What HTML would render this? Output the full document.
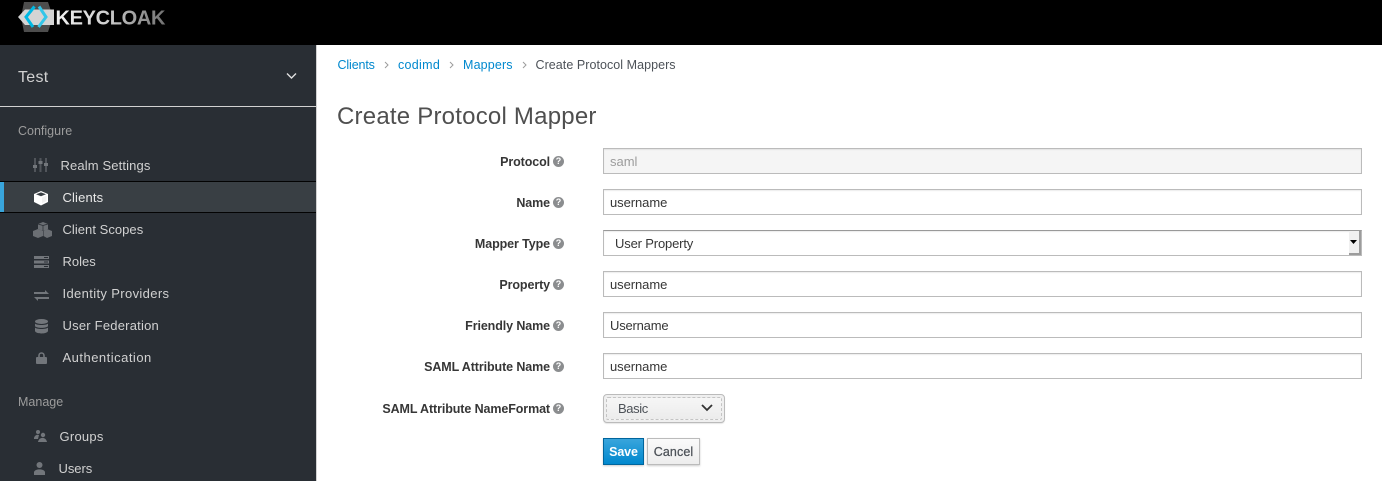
<!DOCTYPE html>
<html><head><meta charset="utf-8"><title>Keycloak</title>
<style>
html,body{margin:0;padding:0;width:1382px;height:481px;overflow:hidden;background:#fff;font-family:"Liberation Sans",sans-serif;font-size:13px;color:#363636}
div,span,svg{position:absolute;box-sizing:border-box}
.t{white-space:nowrap;line-height:16px;height:16px;margin-top:1px}
.n{color:#d1d1d1}
.h{color:#9c9c9c;font-size:12.5px}
.l{font-weight:bold;color:#363636;text-align:right;right:832px;font-size:12.5px;letter-spacing:-.1px}
.q{width:11px;height:11px;border-radius:50%;background:#8b8d8f;color:#fff;font-size:9px;line-height:11px;text-align:center;font-weight:bold;left:0;top:0}
.i{left:603px;width:759px;height:26px;border:1px solid #bbb;background:#fff;box-shadow:inset 0 1px 1px rgba(3,3,3,.075)}
.v{letter-spacing:-.07px}
.a{color:#0088ce;font-size:12.5px}
</style></head><body>
<div style="left:0;top:0;width:1382px;height:45px;background:#000"></div>
<svg style="left:17px;top:0" width="155" height="34" viewBox="0 0 155 34">
<defs><linearGradient id="g" x1="0" x2="1" y1="0" y2="0"><stop offset="0" stop-color="#f2f2f2"/><stop offset=".45" stop-color="#d0d0d0"/><stop offset="1" stop-color="#707070"/></linearGradient></defs>
<polygon points="7,2 31,2 36,17 31,32 7,32 4,17" fill="#4d4d4d"/>
<polygon points="8,9.500 37,9.500 37,25 8,25 1,17" fill="#d4d4d4"/>
<path d="M17.500 6.500 L9 17 L16 27" fill="none" stroke="#00b8e3" stroke-width="3"/>
<path d="M22 6.500 L29 17 L21.500 27" fill="none" stroke="#33c6e9" stroke-width="3"/>
<text x="38.500" y="24.500" font-family="Liberation Sans,sans-serif" font-size="20" font-weight="bold" fill="url(#g)" textLength="110" lengthAdjust="spacing">KEYCLOAK</text>
</svg>

<div style="left:0;top:45px;width:316px;height:436px;background:#292e34"></div>
<div style="left:316px;top:45px;width:1px;height:436px;background:#d1d1d1"></div>
<div class="t" style="left:18px;top:68px;font-size:16px;line-height:18px;height:18px;color:#d1d1d1;letter-spacing:.3px">Test</div>
<svg style="left:286px;top:72px" width="11" height="8"><path d="M1 1.500L5.500 6L10 1.500" fill="none" stroke="#e0e0e0" stroke-width="1.400"/></svg>
<div style="left:0;top:106px;width:316px;height:1px;background:#d1d1d1"></div>

<div class="t h" style="left:18px;top:122px">Configure</div>
<div style="left:0;top:181px;width:316px;height:32px;background:#393f44;border-top:1px solid #030303;border-bottom:1px solid #030303"></div>
<div style="left:0;top:182px;width:4px;height:30px;background:#39a5dc"></div>

<svg style="left:33px;top:157px" width="16" height="16" fill="#72767b"><rect x="1" y="1" width="2" height="14" opacity=".55"/><rect x="6.500" y="1" width="2" height="14" opacity=".55"/><rect x="12" y="1" width="2" height="14" opacity=".55"/><rect x="0" y="8" width="4" height="3"/><rect x="5.500" y="4" width="4" height="3"/><rect x="11" y="6" width="4" height="3"/></svg>
<div class="t n" style="left:60.500px;top:157px;letter-spacing:.13px">Realm Settings</div>

<svg style="left:33px;top:190px" width="16" height="16"><polygon points="8,1 15,4 15,12 8,15.500 1,12 1,4" fill="#fff"/><polygon points="3,4.200 8,2.400 13,4.200 8,6.200" fill="#393f44"/><polygon points="9,7.500 13.500,5.700 13.500,11 9,13.200" fill="#d8d8d8" opacity=".35"/></svg>
<div class="t n" style="left:62.500px;top:189px;color:#e8e8e8;letter-spacing:.14px">Clients</div>

<svg style="left:33px;top:221px" width="20" height="17" fill="#6b6f74"><polygon points="10,1 15,3 15,8 10,10 5,8 5,3"/><polygon points="5,8 10,10 10,15 5,17 0,15 0,10"/><polygon points="14,8 19,10 19,15 14,17 10.500,15 10.500,10"/><path d="M10 4.500L5 3M10 4.500L15 3M10 4.500V10" stroke="#292e34" stroke-width=".7"/></svg>
<div class="t n" style="left:62.500px;top:221px;letter-spacing:.04px">Client Scopes</div>

<svg style="left:34px;top:256px" width="15" height="12" fill="#72767b"><rect width="15" height="3"/><rect y="4.500" width="15" height="3"/><rect y="9" width="15" height="3"/><rect x="10" y="1" width="4" height="1" fill="#292e34"/><rect x="10" y="5.500" width="4" height="1" fill="#292e34"/><rect x="10" y="10" width="4" height="1" fill="#292e34"/></svg>
<div class="t n" style="left:62.500px;top:253px">Roles</div>

<svg style="left:34px;top:290px" width="15" height="11" fill="#72767b"><path d="M0 2H11V0L15 4H0Z"/><path d="M0 7H15V9H4V11Z"/></svg>
<div class="t n" style="left:62.500px;top:285px;letter-spacing:.36px">Identity Providers</div>

<svg style="left:35px;top:319px" width="13" height="15" fill="#72767b"><ellipse cx="6.500" cy="2.500" rx="6.500" ry="2.500"/><path d="M0 4.500C1 6.500 12 6.500 13 4.500V7C12 9.500 1 9.500 0 7zM0 8.500C1 10.500 12 10.500 13 8.500V12C12 15.300 1 15.300 0 12z"/></svg>
<div class="t n" style="left:62.500px;top:317px;letter-spacing:.22px">User Federation</div>

<svg style="left:36px;top:352px" width="11" height="12"><path d="M3 6V3.500a2.500 2.500 0 0 1 5 0V6" fill="none" stroke="#72767b" stroke-width="1.600"/><rect y="5" width="11" height="7" rx="1" fill="#72767b"/></svg>
<div class="t n" style="left:62.500px;top:349px;letter-spacing:.49px">Authentication</div>

<div class="t h" style="left:18px;top:393px">Manage</div>

<svg style="left:34px;top:430px" width="13" height="12" fill="#72767b"><circle cx="4" cy="2" r="2"/><circle cx="9" cy="5" r="2.200"/><path d="M0 8C1 4.500 4 4.500 5 5L4 9H0zM4 12C5 6.500 12 6.500 13 12z"/></svg>
<div class="t n" style="left:59.500px;top:428px;letter-spacing:.25px">Groups</div>

<svg style="left:34px;top:462px" width="11" height="13" fill="#72767b"><circle cx="5.500" cy="3" r="3"/><path d="M0 13V10C1 6.500 10 6.500 11 10V13z"/></svg>
<div class="t n" style="left:58.500px;top:460px;letter-spacing:-.06px">Users</div>

<div class="t a" style="left:337.500px;top:56px;letter-spacing:-.13px">Clients</div>
<svg style="left:384px;top:61px" width="6" height="8"><path d="M1 1L4 4L1 7" fill="none" stroke="#9c9c9c" stroke-width="1"/></svg>
<div class="t a" style="left:398px;top:56px;letter-spacing:.3px">codimd</div>
<svg style="left:449px;top:61px" width="6" height="8"><path d="M1 1L4 4L1 7" fill="none" stroke="#9c9c9c" stroke-width="1"/></svg>
<div class="t a" style="left:463px;top:56px;letter-spacing:.15px">Mappers</div>
<svg style="left:522px;top:61px" width="6" height="8"><path d="M1 1L4 4L1 7" fill="none" stroke="#9c9c9c" stroke-width="1"/></svg>
<div class="t" style="left:535.500px;top:56px;font-size:12.500px;color:#4d5258;letter-spacing:.05px">Create Protocol Mappers</div>

<div class="t" style="left:337px;top:101px;font-size:24px;line-height:30px;height:30px;color:#4f4f4f;letter-spacing:.22px">Create Protocol Mapper</div>

<div class="t l" style="top:153px">Protocol</div>
<div class="q" style="left:553px;top:156px">?</div>
<div class="i" style="top:148px;background:#f5f5f5"></div>
<div class="t" style="left:610px;top:153px;color:#9c9c9c">saml</div>

<div class="t l" style="top:194px">Name</div>
<div class="q" style="left:553px;top:197px">?</div>
<div class="i" style="top:189px"></div>
<div class="t v" style="left:610px;top:194px">username</div>

<div class="t l" style="top:235px">Mapper Type</div>
<div class="q" style="left:553px;top:238px">?</div>
<div class="i" style="top:230px;border-top-color:#999"></div>
<div class="t" style="left:615px;top:235px;letter-spacing:-.16px">User Property</div>
<div style="left:1349px;top:231px;width:12px;height:24px;background:#f0f0f0;border-right:2px solid #9c9c9c;border-bottom:2px solid #9c9c9c"></div>
<svg style="left:1350px;top:240px" width="8" height="5"><path d="M0 0H7L3.500 4z" fill="#000"/></svg>

<div class="t l" style="top:276px">Property</div>
<div class="q" style="left:553px;top:279px">?</div>
<div class="i" style="top:271px"></div>
<div class="t v" style="left:610px;top:276px">username</div>

<div class="t l" style="top:317px">Friendly Name</div>
<div class="q" style="left:553px;top:320px">?</div>
<div class="i" style="top:312px"></div>
<div class="t" style="left:610px;top:317px;letter-spacing:-.2px">Username</div>

<div class="t l" style="top:358px">SAML Attribute Name</div>
<div class="q" style="left:553px;top:361px">?</div>
<div class="i" style="top:353px"></div>
<div class="t v" style="left:610px;top:358px">username</div>

<div class="t l" style="top:400px">SAML Attribute NameFormat</div>
<div class="q" style="left:553px;top:403px">?</div>
<div style="left:603px;top:394px;width:122px;height:29px;border:1px solid #bbb;border-radius:4px;background:#efefef;box-shadow:0 1px 1px rgba(0,0,0,.1)"></div>
<div style="left:606px;top:397px;width:116px;height:23px;border:1px dashed #c4c4c4;border-radius:2px;background:linear-gradient(#f6f6f6,#ececec)"></div>
<div class="t" style="left:618px;top:400px;color:#4d5258;letter-spacing:-.4px">Basic</div>
<svg style="left:701px;top:404px" width="12" height="8"><path d="M1 1L6 6L11 1" fill="none" stroke="#333" stroke-width="1.800"/></svg>

<div style="left:603px;top:438px;width:41px;height:27px;border:1px solid #00659c;background:linear-gradient(#39a5dc,#0088ce);box-shadow:0 1px 2px rgba(0,0,0,.2)"></div>
<div class="t" style="left:603px;top:443px;width:41px;text-align:center;color:#fff;font-weight:bold;font-size:12.500px;letter-spacing:-.1px">Save</div>
<div style="left:647px;top:438px;width:53px;height:27px;border:1px solid #bbb;background:linear-gradient(#fafafa,#ededed);box-shadow:0 1px 2px rgba(0,0,0,.2)"></div>
<div class="t" style="left:647px;top:443px;width:53px;text-align:center;color:#4d5258;font-size:12.500px;letter-spacing:.1px;-webkit-text-stroke:.25px #4d5258">Cancel</div>
</body></html>
